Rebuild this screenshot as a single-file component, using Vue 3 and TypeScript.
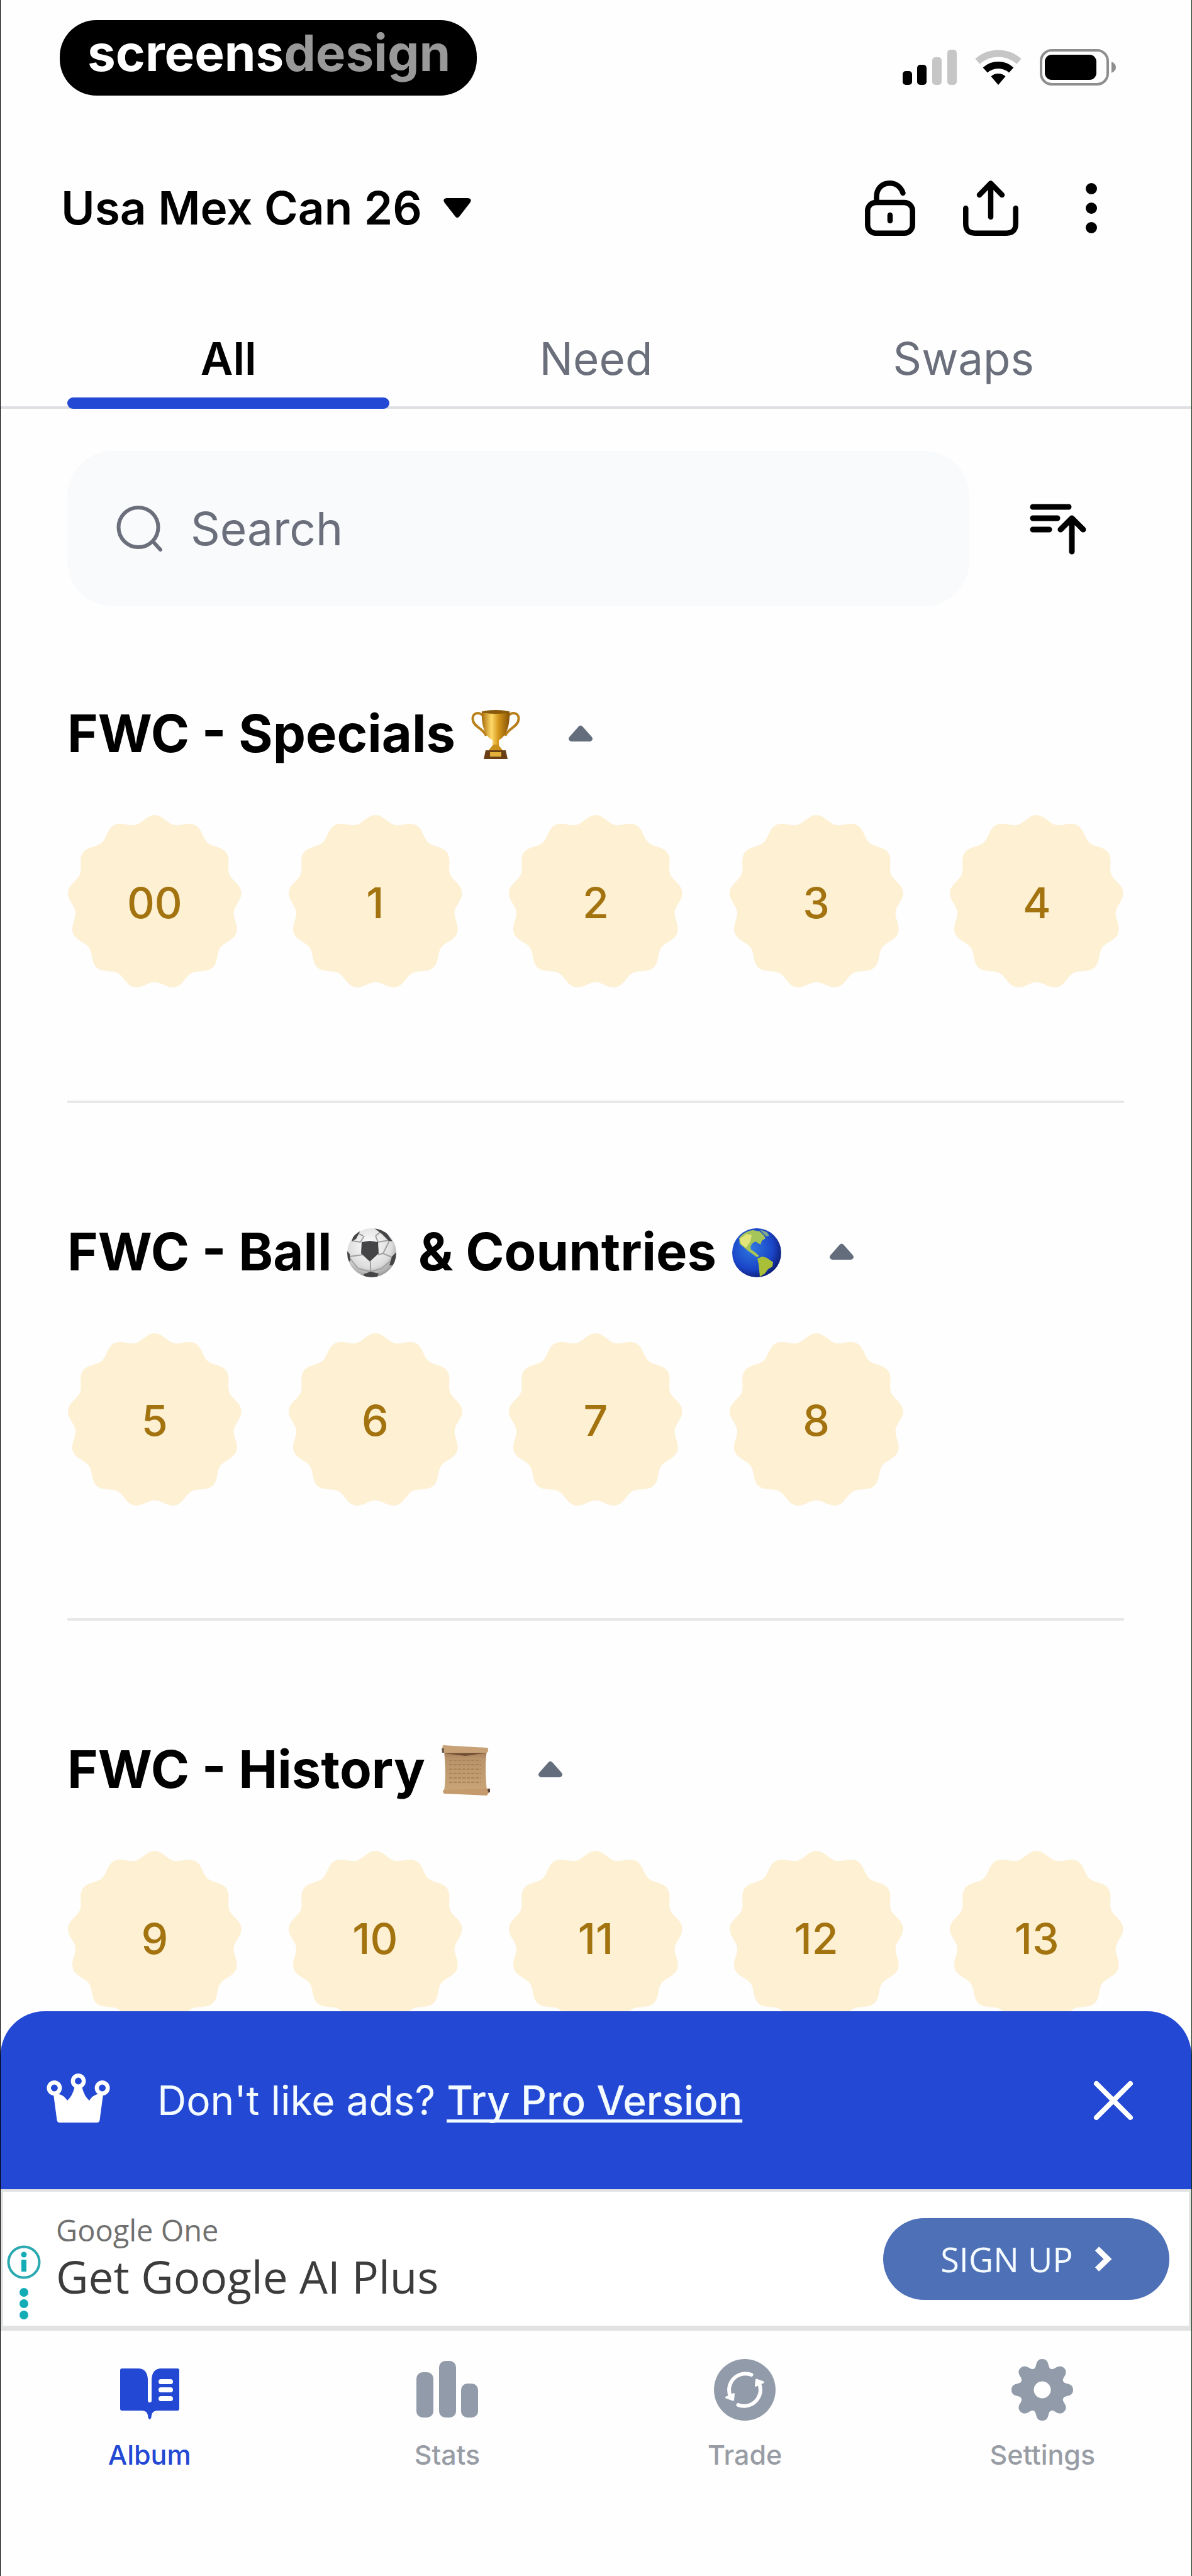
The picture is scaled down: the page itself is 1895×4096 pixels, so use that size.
<script setup lang="ts">
import { computed, ref } from 'vue'

type Emoji = 'trophy' | 'ball' | 'globe' | 'scroll'
interface HeadingPart {
  text?: string
  emoji?: Emoji
}
interface Section {
  id: string
  parts: HeadingPart[]
  stickers: string[]
}

const tabs = ['All', 'Need', 'Swaps']
const activeTab = ref('All')
const query = ref('')
const album = ref('usa-mex-can-26')
const showBanner = ref(true)
const collapsed = ref<Record<string, boolean>>({})

const sections: Section[] = [
  {
    id: 'specials',
    parts: [{ text: 'FWC - Specials ' }, { emoji: 'trophy' }],
    stickers: ['00', '1', '2', '3', '4'],
  },
  {
    id: 'ball',
    parts: [{ text: 'FWC - Ball ' }, { emoji: 'ball' }, { text: ' & Countries ' }, { emoji: 'globe' }],
    stickers: ['5', '6', '7', '8'],
  },
  {
    id: 'history',
    parts: [{ text: 'FWC - History ' }, { emoji: 'scroll' }],
    stickers: ['9', '10', '11', '12', '13'],
  },
]

const visibleSections = computed(() =>
  sections.map((s) => ({ ...s, stickers: s.stickers.filter((n) => n.includes(query.value.trim())) })),
)

const navItems = [
  { id: 'album', label: 'Album' },
  { id: 'stats', label: 'Stats' },
  { id: 'trade', label: 'Trade' },
  { id: 'settings', label: 'Settings' },
]
const activeNav = ref('album')

/** Closed wavy outline with `count` lobes around a centre point. */
function wavyPath(count: number, centre: number, radius: number, depth: number): string {
  const steps = count * 16
  const points: string[] = []
  for (let i = 0; i < steps; i++) {
    const angle = (i / steps) * Math.PI * 2
    const r = radius + depth * Math.cos(count * angle)
    points.push(`${(centre + r * Math.sin(angle)).toFixed(2)} ${(centre - r * Math.cos(angle)).toFixed(2)}`)
  }
  return `M${points.join('L')}Z`
}
const badgePath = wavyPath(13, 139, 133, 6)
const gearTurns = [0, 45, 90, 135]
</script>

<template>
  <div class="app">
    <div class="status-bar">
      <div class="brand"><span>screens</span><span class="brand-dim">design</span></div>
      <div class="status-icons">
        <svg width="86" height="56" viewBox="0 0 86 56" aria-hidden="true">
          <rect x="0" y="34" width="15" height="22" rx="5" />
          <rect x="23" y="24" width="15" height="32" rx="5" />
          <rect x="47" y="12" width="15" height="44" rx="5" fill="#c6c6c6" />
          <rect x="71" y="0" width="15" height="56" rx="5" fill="#c6c6c6" />
        </svg>
        <svg width="74" height="56" viewBox="0 0 74 56" fill="none" stroke-width="11" aria-hidden="true">
          <path d="M4 18.7A49.5 49.5 0 0 1 70 18.7" stroke="#c6c6c6" />
          <path d="M16.3 32.5A31 31 0 0 1 57.700 32.5" stroke="#000" />
          <path d="M37 56L25.500 42.500A17 17 0 0 1 48.500 42.500Z" fill="#000" />
        </svg>
        <svg width="121" height="58" viewBox="0 0 121 58" aria-hidden="true">
          <rect x="2" y="2" width="106" height="54" rx="17" fill="none" stroke="#8e8e8e" stroke-width="4" />
          <rect x="8" y="9" width="82" height="40" rx="11" />
          <path d="M114 20Q121 23 121 29T114 38Z" fill="#8e8e8e" />
        </svg>
      </div>
    </div>

    <header class="header">
      <div class="album-picker">
        <select v-model="album" class="album-select" aria-label="Album">
          <option value="usa-mex-can-26">Usa Mex Can 26</option>
        </select>
        <svg width="44" height="32" viewBox="0 0 44 32" aria-hidden="true">
          <path d="M5 0H39Q46 1 42.500 7L25 29.500Q22 33 19 29.500L1.500 7Q-2 1 5 0Z" />
        </svg>
      </div>
      <div class="header-actions">
        <button class="icon-button" type="button" aria-label="Unlock album">
          <svg width="88" height="88" viewBox="0 0 88 88" fill="none" stroke="#000" stroke-width="8.500" stroke-linecap="round">
            <rect x="8.300" y="35" width="71.400" height="48.700" rx="13" />
            <path d="M22.500 34V26C22.500 13 31 4.300 43.500 4.300C53 4.300 61 10 64.500 20" />
            <path d="M44 55V64" />
          </svg>
        </button>
        <button class="icon-button" type="button" aria-label="Share">
          <svg width="88" height="88" viewBox="0 0 88 88" fill="none" stroke="#000" stroke-width="8.500" stroke-linecap="round" stroke-linejoin="round">
            <path d="M4.300 44V69Q4.300 83.700 19 83.700H69Q83.700 83.700 83.700 69V44" />
            <path d="M44 58V6M26 23L44 4.500L62 23" />
          </svg>
        </button>
        <button class="icon-button" type="button" aria-label="More">
          <svg width="88" height="88" viewBox="0 0 88 88">
            <circle cx="44" cy="13" r="9" />
            <circle cx="44" cy="44" r="9" />
            <circle cx="44" cy="75" r="9" />
          </svg>
        </button>
      </div>
    </header>

    <div class="tabs" role="tablist">
      <button
        v-for="tab in tabs"
        :key="tab"
        class="tab"
        :class="{ active: tab === activeTab }"
        type="button"
        role="tab"
        :aria-selected="tab === activeTab"
        @click="activeTab = tab"
      >
        {{ tab }}
      </button>
    </div>

    <div class="search-row">
      <label class="search-box">
        <svg width="74" height="74" viewBox="0 0 74 74" fill="none" stroke="#6a6f7b" stroke-width="6" stroke-linecap="round" aria-hidden="true">
          <circle cx="35" cy="34.500" r="31.500" />
          <path d="M59 58L70 70" />
        </svg>
        <input v-model="query" class="search-input" type="text" placeholder="Search" aria-label="Search" />
      </label>
      <button class="sort-button" type="button" aria-label="Sort">
        <svg width="90" height="82" viewBox="0 0 90 82" fill="none" stroke="#000" stroke-width="9" stroke-linecap="round" stroke-linejoin="round">
          <path d="M5 6H62M5 24H44M5 42H31" />
          <path d="M67 77V24M49 42L67 24L85 42" />
        </svg>
      </button>
    </div>

    <main class="list">
      <section v-for="section in visibleSections" :key="section.id" class="section">
        <div class="section-head">
          <h2 class="section-title">
            <template v-for="(part, i) in section.parts" :key="i">
              <svg v-if="part.emoji === 'trophy'" class="emoji" viewBox="0 0 80 80" role="img" aria-label="Trophy">
                <defs>
                  <linearGradient id="gold" x1="0" x2="1">
                    <stop offset="0" stop-color="#a86c0a" />
                    <stop offset="0.350" stop-color="#ffd968" />
                    <stop offset="0.600" stop-color="#d4971c" />
                    <stop offset="1" stop-color="#855205" />
                  </linearGradient>
                </defs>
                <path d="M21 11C13 2 1 6 4 18C6 28 20 30 25 42M59 11C67 2 79 6 76 18C74 28 60 30 55 42" fill="none" stroke="#b9801a" stroke-width="4" />
                <path d="M18 3H62C63 24 58 42 45 49V60H35V49C22 42 17 24 18 3Z" fill="url(#gold)" />
                <ellipse cx="40" cy="4" rx="22" ry="3" fill="#8a5a0c" />
                <path d="M36 56H44L52 66H28Z" fill="#c98f1a" />
                <path d="M24 65H56L59 79H21Z" fill="#6b3f16" />
                <path d="M31 68H49V75H31Z" fill="#e3b13a" />
              </svg>
              <svg v-else-if="part.emoji === 'ball'" class="emoji" viewBox="0 0 80 80" role="img" aria-label="Soccer ball">
                <defs>
                  <radialGradient id="leather" cx="0.450" cy="0.350" r="0.650">
                    <stop offset="0" stop-color="#ffffff" />
                    <stop offset="0.700" stop-color="#dcdcdc" />
                    <stop offset="1" stop-color="#9a9a9a" />
                  </radialGradient>
                  <clipPath id="ball-clip"><circle cx="40" cy="40" r="39" /></clipPath>
                </defs>
                <circle cx="40" cy="40" r="39" fill="url(#leather)" />
                <g clip-path="url(#ball-clip)">
                  <path d="M22 23L9 21M50 23L46 13M28 13L22 23M46 13L54 7M26 13L20 10M50 23L68 20M26 43L5 46M50 43L58 41L72 47M58 41L68 21M38 54V70M38 70L18 65M38 70L56 65M18 65L5 48M56 65L71 52" fill="none" stroke="#a0a0a0" stroke-width="2" />
                  <path d="M24 23L37 21L50 23L51 41L37 54L23 41Z" fill="#454548" />
                  <path d="M44 1L60 3L73 22L67 21L56 10Z" fill="#454548" />
                  <path d="M8 22L12 10L23 3L15 18Z" fill="#454548" />
                  <path d="M0 36L5 42L6 54L1 52ZM80 38L72 46L68 60L76 60Z" fill="#454548" />
                  <path d="M27 74L38 70L51 73L48 80H28Z" fill="#454548" />
                </g>
              </svg>
              <svg v-else-if="part.emoji === 'globe'" class="emoji" viewBox="0 0 80 80" role="img" aria-label="Globe showing the Americas">
                <defs>
                  <radialGradient id="ocean" cx="0.400" cy="0.400" r="0.620">
                    <stop offset="0" stop-color="#2f78e0" />
                    <stop offset="0.700" stop-color="#1a45c8" />
                    <stop offset="1" stop-color="#10217c" />
                  </radialGradient>
                </defs>
                <circle cx="40" cy="40" r="39" fill="url(#ocean)" />
                <path d="M12 17C17 9 26 5 34 4L45 6L51 12L54 17L48 21L46 27L41 24L38 22L33 25L30 30L31 35L36 38L44 45L40 47L32 41L25 36L18 30L13 26Z" fill="#a5c45a" />
                <path d="M13 18L24 10L32 12L30 22L23 32L15 26Z" fill="#e2e67a" />
                <path d="M41 49L49 46L56 48L66 55L65 62L58 66L53 73L45 78L44 68L43 58Z" fill="#a9bf38" />
                <path d="M45 3L56 7L60 13L55 14L50 9Z" fill="#7fa88a" />
              </svg>
              <svg v-else-if="part.emoji === 'scroll'" class="emoji" viewBox="0 0 80 80" role="img" aria-label="Scroll">
                <defs>
                  <linearGradient id="paper" x1="0" x2="0" y1="0" y2="1">
                    <stop offset="0" stop-color="#9c7450" />
                    <stop offset="0.200" stop-color="#b9936a" />
                    <stop offset="1" stop-color="#c8a477" />
                  </linearGradient>
                </defs>
                <path d="M6 9L74 8C71 28 72 52 74 72L6 72C9 52 8 30 6 9Z" fill="url(#paper)" />
                <path d="M14 24H64M14 31H65M14 38H64M14 45H65M14 52H64M14 59H64" stroke="#a98358" stroke-width="2" stroke-dasharray="5 2" />
                <path d="M4 0L75 4Q78 8 74 12L6 12Q2 9 4 0Z" fill="#c9a177" />
                <path d="M6 13L74 12L40 17Z" fill="#6f4e33" />
                <path d="M2 5H6V12H3Z" fill="#6f5b50" />
                <path d="M5 71L75 69Q79 70 78 74L74 80L6 77Q3 74 5 71Z" fill="#c59a6d" />
                <path d="M75 69H79V75H76Z" fill="#5d4636" />
              </svg>
              <template v-else>{{ part.text }}</template>
            </template>
          </h2>
          <button
            class="toggle"
            type="button"
            aria-label="Collapse section"
            :aria-expanded="!collapsed[section.id]"
            @click="collapsed[section.id] = !collapsed[section.id]"
          >
            <svg width="38" height="26" viewBox="0 0 38 26">
              <path d="M4 26Q-2 24 1 19L16 2Q19 -1 22 2L37 19Q40 24 34 26Z" fill="#636d7c" />
            </svg>
          </button>
        </div>
        <div v-show="!collapsed[section.id]" class="stickers">
          <button v-for="n in section.stickers" :key="n" class="sticker" type="button">
            <svg class="sticker-shape" viewBox="0 0 278 278" aria-hidden="true">
              <path :d="badgePath" fill="#fdf0d3" />
            </svg>
            <span class="sticker-number">{{ n }}</span>
          </button>
        </div>
      </section>
    </main>

    <aside v-if="showBanner" class="banner">
      <svg class="crown" width="101" height="78" viewBox="0 0 101 78" aria-hidden="true">
        <g fill="none" stroke="#fff" stroke-width="6.500">
          <circle cx="12.400" cy="23" r="8.700" />
          <circle cx="50.500" cy="12" r="8.700" />
          <circle cx="88.600" cy="23" r="8.700" />
        </g>
        <path d="M11 33C20 30 29 36 33 43C40 37 43 28 45 20H56C58 28 61 37 68 43C72 36 81 30 90 33L84.500 74Q84 78 80 78H21Q17 78 16.500 74Z" fill="#fff" />
      </svg>
      <p class="banner-text">Don't like ads? <a class="banner-link" href="#pro">Try Pro Version</a></p>
      <button class="banner-close" type="button" aria-label="Close" @click="showBanner = false">
        <svg width="64" height="64" viewBox="0 0 64 64" fill="none" stroke="#fff" stroke-width="8" stroke-linecap="round">
          <path d="M5 5L59 59M59 5L5 59" />
        </svg>
      </button>
    </aside>

    <div class="ad">
      <button class="ad-info" type="button" aria-label="Ad information">
        <svg width="54" height="118" viewBox="0 0 54 118" fill="#14adb6">
          <circle cx="27" cy="27" r="24.500" fill="none" stroke="#2ba9b1" stroke-width="4" />
          <circle cx="27" cy="15" r="4.500" />
          <rect x="23" y="23" width="8" height="19" />
          <circle cx="27" cy="75" r="7" />
          <circle cx="27" cy="93" r="7" />
          <circle cx="27" cy="111" r="7" />
        </svg>
      </button>
      <div class="ad-copy">
        <span class="ad-brand">Google One</span>
        <span class="ad-title">Get Google AI Plus</span>
      </div>
      <a class="ad-cta" href="#signup">
        SIGN UP
        <svg width="28" height="40" viewBox="0 0 28 40" fill="none" stroke="#fff" stroke-width="9" aria-hidden="true">
          <path d="M4 3.500L21 20L4 36.500" />
        </svg>
      </a>
    </div>

    <nav class="bottom-nav">
      <a
        v-for="item in navItems"
        :key="item.id"
        class="nav-item"
        :class="{ active: item.id === activeNav }"
        :href="`#${item.id}`"
        @click="activeNav = item.id"
      >
        <svg class="nav-icon" width="98" height="98" viewBox="0 0 98 98" fill="currentColor" aria-hidden="true">
          <g v-if="item.id === 'album'">
            <path d="M5 15H32Q45 16 46 32V66Q46 69 49 69T52 66V32Q53 16 66 15H93Q96 15 96 18V79Q96 82 93 82H62C54 82 52 86 51.500 93Q49 99 46.500 93C46 86 44 82 36 82H5Q2 82 2 79V18Q2 15 5 15Z" />
            <path d="M67 36H82M67 49H82M67 63H82" stroke="#fff" stroke-width="8" stroke-linecap="round" />
          </g>
          <g v-else-if="item.id === 'stats'">
            <rect x="0" y="21" width="27" height="72" rx="10" />
            <rect x="36" y="3" width="27" height="90" rx="10" />
            <rect x="71" y="39" width="27" height="54" rx="10" />
          </g>
          <g v-else-if="item.id === 'trade'">
            <circle cx="49" cy="49" r="49" />
            <g v-for="turn in [0, 180]" :key="turn" :transform="`rotate(${turn} 49 49)`">
              <path d="M59.500 25A26 26 0 0 0 26 59" fill="none" stroke="#fff" stroke-width="6" stroke-linecap="round" />
              <path d="M19.500 61L31.500 55.500L30.500 65Z" fill="#fff" stroke="#fff" stroke-width="3" stroke-linejoin="round" />
            </g>
          </g>
          <g v-else>
            <circle cx="49" cy="49" r="36" />
            <path
              v-for="turn in gearTurns"
              :key="turn"
              :transform="`rotate(${turn} 49 49)`"
              d="M49 0C56 0 58 5 59 10C60 14 61 15 65 18V80C61 83 60 84 59 88C58 93 56 98 49 98S40 93 39 88C38 84 37 83 33 80V18C37 15 38 14 39 10C40 5 42 0 49 0Z"
            />
            <circle cx="49" cy="49" r="13.500" fill="#fff" />
          </g>
        </svg>
        <span>{{ item.label }}</span>
      </a>
    </nav>
  </div>
</template>

<style>
body {
  margin: 0;
  background: #fff;
}
</style>

<style scoped>
.app {
  box-sizing: border-box;
  display: flex;
  flex-direction: column;
  height: 100vh;
  border-left: 1px solid #000;
  border-right: 1px solid #0b2a0b;
  background: #fefefe;
  color: #000;
  font-family: Inter, 'Liberation Sans', sans-serif;
  overflow: hidden;
}
svg {
  display: block;
  flex: none;
}
button {
  padding: 0;
  border: 0;
  background: none;
  color: inherit;
  font: inherit;
  cursor: pointer;
}

.status-bar {
  display: flex;
  justify-content: space-between;
  align-items: flex-end;
  flex: none;
  padding: 32px 120px 0 94px;
}
.brand {
  box-sizing: border-box;
  height: 120px;
  padding: 0 42px 0 44px;
  border-radius: 58px;
  background: #000;
  color: #fff;
  font-size: 80px;
  font-weight: 700;
  line-height: 104px;
}
.brand-dim {
  color: #999;
}
.status-icons {
  display: flex;
  align-items: center;
  gap: 29px;
  padding-bottom: 16px;
}

.header {
  display: flex;
  justify-content: space-between;
  align-items: center;
  flex: none;
  height: 200px;
  margin-top: 79px;
  padding: 0 115px 0 96px;
}
.album-picker {
  display: flex;
  align-items: center;
  gap: 34px;
}
.album-select {
  appearance: none;
  padding: 0;
  border: 0;
  background: none;
  color: #000;
  font-family: inherit;
  font-size: 73px;
  font-weight: 600;
  line-height: 96px;
}
.header-actions {
  display: flex;
  gap: 72px;
}

.tabs {
  display: flex;
  flex: none;
  height: 160px;
  margin-top: 59px;
  padding: 0 70px;
  box-shadow: inset 0 -4px #dfe0e3;
}
.tab {
  position: relative;
  flex: 1;
  color: #6a6f7b;
  font-size: 71px;
  line-height: 160px;
}
.tab.active {
  color: #000;
  font-weight: 600;
}
.tab.active::after {
  content: '';
  position: absolute;
  right: 36px;
  bottom: 0;
  left: 36px;
  height: 18px;
  border-radius: 9px;
  background: #2248d4;
}

.search-row {
  display: flex;
  flex: none;
  gap: 36px;
  height: 247px;
  margin-top: 67px;
  padding: 0 107px 0 106px;
}
.search-box {
  display: flex;
  flex: 1;
  align-items: center;
  gap: 44px;
  padding: 0 78px;
  border-radius: 72px;
  background: #f8fafc;
}
.search-input {
  flex: 1;
  min-width: 0;
  padding: 0;
  border: 0;
  outline: 0;
  background: none;
  color: #000;
  font-family: inherit;
  font-size: 73px;
  line-height: 96px;
}
.search-input::placeholder {
  color: #6a6f7b;
  opacity: 1;
}
.sort-button {
  display: flex;
  align-items: center;
  justify-content: center;
  width: 210px;
}

.list {
  flex: 1;
  min-height: 0;
  padding: 0 107px 0 106px;
  overflow: hidden;
}
.section {
  padding: 188px 0 176px;
  border-bottom: 4px solid #e7e8e9;
}
.section:first-child {
  padding-top: 154px;
}
.section-head {
  display: flex;
  align-items: center;
  gap: 62px;
  height: 96px;
}
.section-title {
  margin: 0;
  font-size: 83px;
  font-weight: 700;
  line-height: 96px;
  white-space: pre;
}
.emoji {
  display: inline-block;
  width: 80px;
  height: 80px;
  margin: 0 14px 0 4px;
  vertical-align: -12px;
}
.stickers {
  display: grid;
  grid-template-columns: repeat(5, 1fr);
  gap: 73px;
  margin-top: 82px;
}
.sticker {
  display: grid;
  place-items: center;
  color: #a3730f;
  font-size: 68px;
  font-weight: 500;
}
.sticker-shape,
.sticker-number {
  grid-area: 1 / 1;
}
.sticker-shape {
  width: 100%;
}

.banner {
  display: flex;
  align-items: center;
  flex: none;
  height: 283px;
  padding: 0 92px 0 73px;
  border-radius: 70px 70px 0 0;
  background: #2248d4;
  color: #f4fbff;
}
.crown {
  margin-bottom: 8px;
}
.banner-text {
  flex: 1;
  margin: 0 0 0 75px;
  font-size: 64px;
  line-height: 76px;
}
.banner-link {
  color: inherit;
  font-weight: 500;
  text-decoration: underline;
  text-decoration-thickness: 5px;
  text-decoration-skip-ink: none;
  text-underline-offset: 7px;
}

.ad {
  display: flex;
  align-items: center;
  flex: none;
  height: 213px;
  padding: 0 31px 0 6px;
  border: solid #e1e3e3;
  border-width: 4px 4px 8px;
  background: #fff;
  font-family: 'Open Sans', 'Noto Sans', sans-serif;
}
.ad-info {
  margin-top: 74px;
}
.ad-copy {
  display: flex;
  flex: 1;
  flex-direction: column;
  margin: 0 0 6px 24px;
}
.ad-brand {
  color: #707070;
  font-size: 47px;
  line-height: 62px;
}
.ad-title {
  color: #3c3c3c;
  font-size: 71px;
  line-height: 86px;
}
.ad-cta {
  display: flex;
  align-items: center;
  justify-content: center;
  gap: 34px;
  width: 455px;
  height: 130px;
  border-radius: 65px;
  background: #4e70b7;
  color: #f4fbff;
  font-size: 54px;
  line-height: 72px;
  text-decoration: none;
}

.bottom-nav {
  display: flex;
  flex: none;
  height: 390px;
}
.nav-item {
  display: flex;
  flex: 1;
  flex-direction: column;
  align-items: center;
  gap: 26px;
  padding-top: 45px;
  color: #989da5;
  font-size: 43px;
  font-weight: 500;
  line-height: 56px;
  text-decoration: none;
}
.nav-icon {
  color: #929ba9;
}
.nav-item.active,
.nav-item.active .nav-icon {
  color: #2248d4;
}
</style>
